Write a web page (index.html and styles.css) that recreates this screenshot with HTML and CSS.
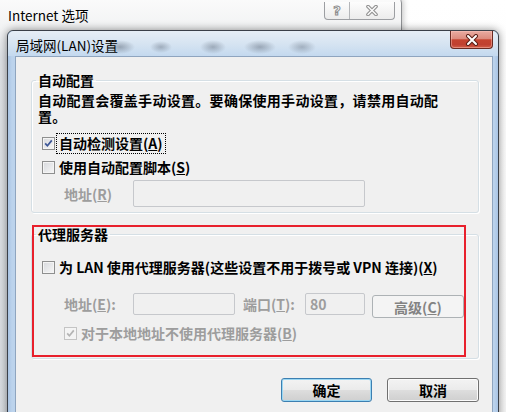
FILE: index.html
```html
<!DOCTYPE html>
<html lang="zh-CN">
<head>
<meta charset="utf-8">
<title>局域网(LAN)设置</title>
<link rel="stylesheet" href="styles.css">
</head>
<body>
<div class="desktop">
  <div class="bgwin">
    <div class="bgwin-title">
      <span class="bgwin-caption">Internet 选项</span>
      <div class="caption-btns">
        <span class="cbtn help">?</span>
        <span class="cbtn close">
          <svg width="14" height="11" viewBox="0 0 14 11"><path d="M3 1.5 L11 9.5 M11 1.5 L3 9.5" stroke="#8c8c8c" stroke-width="3.6" stroke-linecap="round"/><path d="M3 1.5 L11 9.5 M11 1.5 L3 9.5" stroke="#fafafa" stroke-width="1.6" stroke-linecap="round"/></svg>
        </span>
      </div>
    </div>
  </div>

  <div class="dialog">
    <div class="dlg-title">
      <span class="dlg-caption">局域网(LAN)设置</span>
      <span class="dlg-close">
        <svg width="16" height="12" viewBox="0 0 16 12"><path d="M4 2 L12 10 M12 2 L4 10" stroke="#5a2018" stroke-width="4" stroke-linecap="round"/><path d="M4 2 L12 10 M12 2 L4 10" stroke="#ffffff" stroke-width="2" stroke-linecap="round"/></svg>
      </span>
    </div>

    <div class="client">
      <fieldset class="group g1">
        <legend>自动配置</legend>
        <p class="desc">自动配置会覆盖手动设置。要确保使用手动设置，请禁用自动配置。</p>
        <div class="check-row first">
          <span class="cb checked"><svg width="11" height="11" viewBox="0 0 11 11"><path d="M2.2 5.4 L4.4 7.8 L8.8 2.4" stroke="#3b5596" stroke-width="1.7" fill="none"/></svg></span>
          <span class="cb-label focused">自动检测设置(<u>A</u>)</span>
        </div>
        <div class="check-row second">
          <span class="cb"></span>
          <span class="cb-label">使用自动配置脚本(<u>S</u>)</span>
        </div>
        <div class="field-row tall">
          <span class="field-label disabled">地址(<u>R</u>)</span>
          <span class="input wide-input"></span>
        </div>
      </fieldset>

      <fieldset class="group g2">
        <legend>代理服务器</legend>
        <div class="check-row proxy">
          <span class="cb"></span>
          <span class="cb-label">为 LAN 使用代理服务器(这些设置不用于拨号或 VPN 连接)(<u>X</u>)</span>
        </div>
        <div class="field-row short">
          <span class="field-label disabled">地址(<u>E</u>):</span>
          <span class="input addr-input"></span>
          <span class="field-label disabled port-label">端口(<u>T</u>):</span>
          <span class="input port-input">80</span>
          <span class="btn disabled-btn">高级(<u>C</u>)</span>
        </div>
        <div class="check-row bypass">
          <span class="cb disabled-cb"><svg width="11" height="11" viewBox="0 0 11 11"><path d="M2.2 5.4 L4.4 7.8 L8.8 2.4" stroke="#b4b4b4" stroke-width="1.7" fill="none"/></svg></span>
          <span class="cb-label disabled">对于本地地址不使用代理服务器(<u>B</u>)</span>
        </div>
      </fieldset>

      <div class="actions">
        <span class="btn default-btn">确定</span>
        <span class="btn">取消</span>
      </div>

      <div class="annotation"></div>
    </div>
  </div>
</div>
</body>
</html>
```
FILE: styles.css
```css
* { box-sizing: border-box; }

html, body {
  margin: 0;
  padding: 0;
}

body {
  width: 506px;
  height: 412px;
  overflow: hidden;
  background: #ffffff;
  font-family: "Noto Sans CJK SC", "Noto Sans", sans-serif;
  font-size: 14px;
  font-weight: 600;
  color: #000;
}

.desktop {
  position: relative;
  width: 506px;
  height: 412px;
  overflow: hidden;
  background: linear-gradient(#ffffff, #f6f6f6);
}

/* background window: Internet 选项 */
.bgwin {
  position: absolute;
  left: -6px;
  top: -4px;
  width: 408px;
  height: 440px;
  border: 1px solid #8e9093;
  border-radius: 7px 7px 0 0;
  background: linear-gradient(#fbfbfb, #f1f2f3 34px, #dfe2e6 60px, #d9dde2);
  box-shadow: 1px 0 6px rgba(0, 0, 0, 0.25);
}

.bgwin-title {
  display: flex;
  align-items: flex-start;
  height: 34px;
  padding-left: 13px;
}

.bgwin-caption {
  font-size: 13.5px;
  font-weight: 400;
  line-height: 16px;
  margin-top: 10px;
}

.caption-btns {
  margin-left: auto;
  margin-right: 6px;
  margin-top: 5px;
  display: flex;
  height: 18px;
  border: 1px solid #9c9ea2;
  border-top: none;
  border-radius: 0 0 4px 4px;
  background: linear-gradient(#fdfdfd, #ececec);
  overflow: hidden;
}

.cbtn {
  display: flex;
  align-items: center;
  justify-content: center;
  height: 100%;
}

.cbtn.help {
  width: 25px;
  border-right: 1px solid #b4b6b9;
  font-family: "DejaVu Sans", sans-serif;
  font-weight: 700;
  font-size: 13px;
  color: #fafafa;
  -webkit-text-stroke: 1px #8c8c8c;
}

.cbtn.close {
  width: 44px;
}

/* LAN dialog */
.dialog {
  position: absolute;
  left: 7px;
  top: 30px;
  width: 492px;
  height: 400px;
  border: 1px solid #3a4049;
  border-radius: 6px 6px 0 0;
  padding: 0 5px 0 7px;
  display: flex;
  flex-direction: column;
  background: linear-gradient(90deg, #a9c4e4, #bcd3ec 4px, #c4d9ef 50%, #bcd3ec calc(100% - 4px), #a9c4e4);
  box-shadow: 0 0 9px rgba(0, 0, 0, 0.45);
}

.dlg-title {
  height: 25px;
  margin: 0 -5px 0 -7px;
  padding: 0 5px 0 8px;
  display: flex;
  align-items: flex-start;
  border-radius: 6px 6px 0 0;
  background:
    radial-gradient(ellipse 15px 7px at 112px 16px, rgba(70, 80, 96, 0.42), transparent),
    radial-gradient(ellipse 11px 6px at 153px 16px, rgba(70, 80, 96, 0.36), transparent),
    radial-gradient(ellipse 13px 7px at 205px 16px, rgba(70, 80, 96, 0.38), transparent),
    radial-gradient(ellipse 16px 7px at 252px 16px, rgba(70, 80, 96, 0.40), transparent),
    radial-gradient(ellipse 14px 7px at 294px 16px, rgba(70, 80, 96, 0.34), transparent),
    linear-gradient(#e6eef6, #d3e2f1 60%, #c4d9ef);
}

.dlg-caption {
  font-size: 13.5px;
  font-weight: 400;
  line-height: 16px;
  margin-top: 6px;
}

.dlg-close {
  margin-left: auto;
  width: 43px;
  height: 18px;
  display: flex;
  align-items: center;
  justify-content: center;
  border: 1px solid #6a2a22;
  border-top: none;
  border-radius: 0 0 4px 4px;
  background: linear-gradient(#e9aca2, #dc8b7e 45%, #c5432f 52%, #c04030 80%, #d2604a);
  box-shadow: inset 0 0 0 1px rgba(255, 200, 190, 0.45);
}

.client {
  position: relative;
  flex: 1;
  background: #f0f0f0;
  border: 1px solid #8fa5bf;
  padding: 15px 13px 0 15px;
}

/* group boxes */
.group {
  margin: 0;
  min-width: 0;
  border: 1px solid #d5dfe5;
  border-radius: 3px;
  padding: 0 6px 5px;
  box-shadow: inset 1px 1px 0 #ffffff, 1px 1px 0 #ffffff;
}

.group legend {
  padding: 0 2px;
  margin-left: -2px;
  line-height: 16px;
}

.g2 {
  margin-top: 13px;
  padding-bottom: 15px;
}

.desc {
  margin: 4px 0 0;
  width: 412px;
  line-height: 16px;
  letter-spacing: 0.3px;
}

.check-row {
  display: flex;
  align-items: center;
  height: 20px;
  padding-left: 4px;
  gap: 4px;
  white-space: nowrap;
}

.check-row.first { margin-top: 9px; }
.check-row.second { margin-top: 4px; }
.check-row.proxy { margin-top: 15px; }
.check-row.bypass { margin-top: 5px; padding-left: 26px; }

.cb {
  width: 13px;
  height: 13px;
  flex: none;
  display: flex;
  align-items: center;
  justify-content: center;
  border: 1px solid #8e8f8f;
  background: linear-gradient(135deg, #d7d9dd, #f7f7f7);
  box-shadow: inset 0 0 0 1px #f4f4f4;
}

.cb.disabled-cb {
  border-color: #c4c4c4;
  background: #f4f4f4;
}

.cb-label {
  line-height: 17px;
}

.cb-label.focused {
  outline: 1px dotted #000;
  outline-offset: 1px;
  padding: 0 1px;
  margin-left: -1px;
}

.disabled { color: #9d9d9d; }

.field-row {
  display: flex;
  padding-left: 26px;
  white-space: nowrap;
}

.field-row.tall {
  margin-top: 3px;
  align-items: center;
  height: 27px;
}

.field-row.short {
  margin-top: 16px;
  align-items: flex-start;
}

.field-label {
  width: 69px;
  flex: none;
  line-height: 22px;
}

.port-label {
  width: 62px;
  margin-left: 8px;
}

.input {
  display: block;
  flex: none;
  border: 1px solid #c6c8cc;
  border-radius: 2px;
  background: #f0f0f0;
  color: #9d9d9d;
  padding-left: 4px;
  line-height: 20px;
}

.wide-input { width: 232px; height: 27px; }
.addr-input { width: 102px; height: 22px; }
.port-input { width: 60px; height: 22px; }

/* buttons */
.btn {
  display: flex;
  align-items: center;
  justify-content: center;
  height: 24px;
  width: 92px;
  border: 1px solid #707070;
  border-radius: 3px;
  background: linear-gradient(#f3f3f3, #ebebeb 48%, #dddddd 52%, #cfcfcf);
  box-shadow: inset 0 0 0 1px #fbfbfb;
}

.btn.disabled-btn {
  margin-left: 7px;
  margin-top: 2px;
  height: 23px;
  border-color: #adb2b5;
  background: #f4f4f4;
  box-shadow: none;
  color: #838383;
}

.btn.default-btn {
  width: 91px;
  border-color: #3c7fb1;
  box-shadow: inset 0 0 0 1px #9bd7f3;
}

.actions {
  display: flex;
  justify-content: flex-end;
  gap: 15px;
  margin-top: 19px;
}

/* red annotation rectangle drawn over the proxy group */
.annotation {
  position: absolute;
  left: 16px;
  top: 168px;
  width: 434px;
  height: 132px;
  border: 2px solid #e8202c;
  pointer-events: none;
}
```
